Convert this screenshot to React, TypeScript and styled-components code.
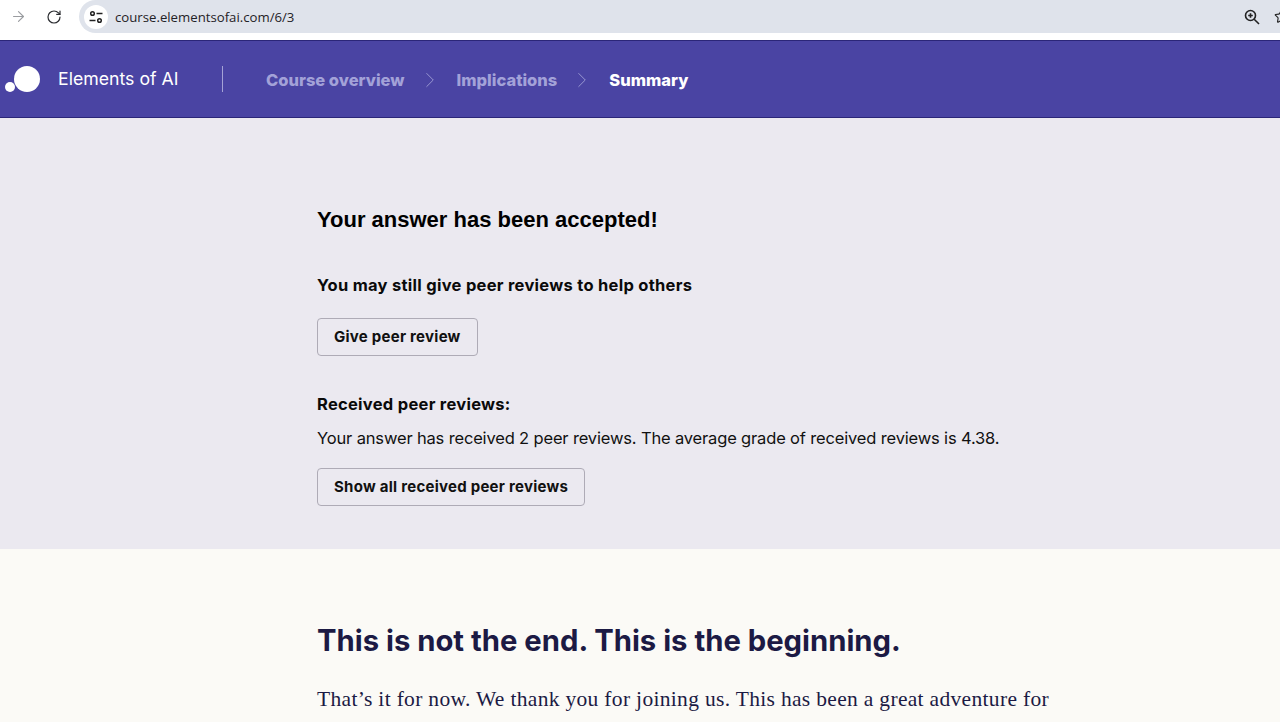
import { createGlobalStyle } from "styled-components";
import styled from "styled-components";
import { ArrowRight, RotateCw, ChevronRight, Star } from "lucide-react";

const GlobalStyle = createGlobalStyle`
  html, body {
    margin: 0;
    padding: 0;
    height: 722px;
    overflow: hidden;
    background: #fbfaf6;
    font-family: "Inter", "Liberation Sans", sans-serif;
  }
`;

const Toolbar = styled.div`
  height: 40px;
  box-sizing: border-box;
  padding-bottom: 7px;
  background: #ffffff;
  display: flex;
  align-items: stretch;
`;

const NavIcons = styled.div`
  display: flex;
  align-items: center;
  width: 79px;
  padding-left: 10px;
  box-sizing: border-box;
  gap: 19px;
  flex-shrink: 0;
`;

const Omnibox = styled.div`
  flex: 1;
  display: flex;
  align-items: center;
  background: #dfe3eb;
  border-radius: 17px 0 0 17px;
  padding-left: 5px;
`;

const SiteBadge = styled.div`
  width: 24px;
  height: 24px;
  border-radius: 50%;
  background: #ffffff;
  display: flex;
  align-items: center;
  justify-content: center;
  flex-shrink: 0;
`;

const Url = styled.span`
  margin-left: 7px;
  font-family: "Open Sans", "Liberation Sans", sans-serif;
  font-size: 13.2px;
  color: #1f2226;
  flex: 1;
`;

const RightIcons = styled.div`
  display: flex;
  align-items: center;
  gap: 14px;
  margin-right: -9px;
`;

const Header = styled.header`
  height: 78px;
  box-sizing: border-box;
  background: #4a44a3;
  border-top: 1px solid #2b2678;
  border-bottom: 1px solid #2b2678;
  display: flex;
  align-items: center;
  color: #fff;
`;

const Logo = styled.div`
  width: 58px;
  padding-left: 5px;
  box-sizing: border-box;
  display: flex;
  align-items: center;
  flex-shrink: 0;
`;

const Brand = styled.div`
  width: 165px;
  box-sizing: border-box;
  height: 26px;
  line-height: 26px;
  border-right: 1px solid #a5a3d6;
  font-family: "Inter", sans-serif;
  font-size: 17.7px;
  color: #fff;
  flex-shrink: 0;
  font-weight: 400;
`;

const Crumbs = styled.nav`
  margin-left: 43px;
  padding-top: 1px;
  display: flex;
  align-items: center;
`;

const Crumb = styled.span<{ $active?: boolean }>`
  font-family: "Inter", sans-serif;
  font-size: 16.5px;
  font-weight: 800;
  color: ${(p) => (p.$active ? "#ffffff" : "#a3a2d8")};
`;

const CrumbSep = styled.span`
  display: flex;
  width: 52px;
  justify-content: center;
  padding-right: 2px;
  box-sizing: border-box;
  color: #a3a2d8;
`;

const ReviewBand = styled.section`
  height: 431px;
  box-sizing: border-box;
  background: #ebe9f0;
  padding: 89px 0 0 317px;
`;

const Accepted = styled.h2`
  margin: 0;
  font-family: "Liberation Sans", Arial, sans-serif;
  font-size: 22px;
  line-height: 26px;
  font-weight: 700;
  color: #000;
`;

const SubHead = styled.h3<{ $top: number }>`
  margin: ${(p) => p.$top}px 0 0;
  font-family: "Inter", sans-serif;
  font-size: 16.5px;
  line-height: 22px;
  font-weight: 700;
  letter-spacing: 0.28px;
  color: #0a0a0a;
`;

const ReviewText = styled.p`
  margin: 12px 0 0;
  font-family: "Inter", sans-serif;
  font-size: 16.5px;
  line-height: 22px;
  letter-spacing: -0.16px;
  color: #111;
`;

const OutlineButton = styled.button<{ $top: number }>`
  display: block;
  margin-top: ${(p) => p.$top}px;
  height: 38px;
  padding: 0 16px 2px;
  background: transparent;
  border: 1px solid #aeabb6;
  border-radius: 4px;
  font-family: "Inter", sans-serif;
  font-size: 15px;
  font-weight: 700;
  letter-spacing: 0.26px;
  color: #111;
`;

const ClosingBand = styled.section`
  background: #fbfaf6;
  padding: 73px 0 0 317px;
`;

const ClosingTitle = styled.h1`
  margin: 0;
  font-family: "Inter", sans-serif;
  font-size: 29.25px;
  line-height: 38px;
  font-weight: 700;
  color: #1c1a44;
`;

const ClosingText = styled.p`
  margin: 24px 0 0;
  width: 780px;
  font-family: "Liberation Serif", serif;
  font-size: 21.5px;
  line-height: 30px;
  letter-spacing: 0.32px;
  color: #1c1a44;
`;

export default function App() {
  return (
    <>
      <GlobalStyle />
      <Toolbar>
        <NavIcons>
          <ArrowRight size={17} color="#9a9ca0" strokeWidth={1.6} />
          <RotateCw size={16} color="#2a2c30" strokeWidth={1.8} />
        </NavIcons>
        <Omnibox>
          <SiteBadge>
            <svg width="16" height="16" viewBox="0 0 16 16" fill="none" stroke="#222" strokeWidth="1.5">
              <circle cx="4.5" cy="4.5" r="1.8" />
              <path d="M8.5 4.5h6" />
              <path d="M1.5 11.5h6" />
              <circle cx="11.5" cy="11.5" r="1.8" />
            </svg>
          </SiteBadge>
          <Url>course.elementsofai.com/6/3</Url>
          <RightIcons>
            <svg width="16" height="16" viewBox="0 0 16 16" fill="none" stroke="#222" strokeWidth="1.6">
              <circle cx="6.5" cy="6.5" r="5" />
              <path d="M10.2 10.2L15 15" />
              <path d="M4.2 6.5h4.6M6.5 4.2v4.6" />
            </svg>
            <Star size={15} color="#222" strokeWidth={1.8} />
          </RightIcons>
        </Omnibox>
      </Toolbar>
      <Header>
        <Logo>
          <svg width="38" height="30" viewBox="0 0 38 30">
            <circle cx="22" cy="15" r="13" fill="#fff" />
            <circle cx="5" cy="23" r="5" fill="#fff" />
          </svg>
        </Logo>
        <Brand>Elements of AI</Brand>
        <Crumbs>
          <Crumb>Course overview</Crumb>
          <CrumbSep>
            <ChevronRight size={26} strokeWidth={0.8} />
          </CrumbSep>
          <Crumb>Implications</Crumb>
          <CrumbSep>
            <ChevronRight size={26} strokeWidth={0.8} />
          </CrumbSep>
          <Crumb $active>Summary</Crumb>
        </Crumbs>
      </Header>
      <ReviewBand>
        <Accepted>Your answer has been accepted!</Accepted>
        <SubHead $top={41}>You may still give peer reviews to help others</SubHead>
        <OutlineButton $top={22}>Give peer review</OutlineButton>
        <SubHead $top={37}>Received peer reviews:</SubHead>
        <ReviewText>Your answer has received 2 peer reviews. The average grade of received reviews is 4.38.</ReviewText>
        <OutlineButton $top={19}>Show all received peer reviews</OutlineButton>
      </ReviewBand>
      <ClosingBand>
        <ClosingTitle>This is not the end. This is the beginning.</ClosingTitle>
        <ClosingText>That’s it for now. We thank you for joining us. This has been a great adventure for</ClosingText>
      </ClosingBand>
    </>
  );
}
